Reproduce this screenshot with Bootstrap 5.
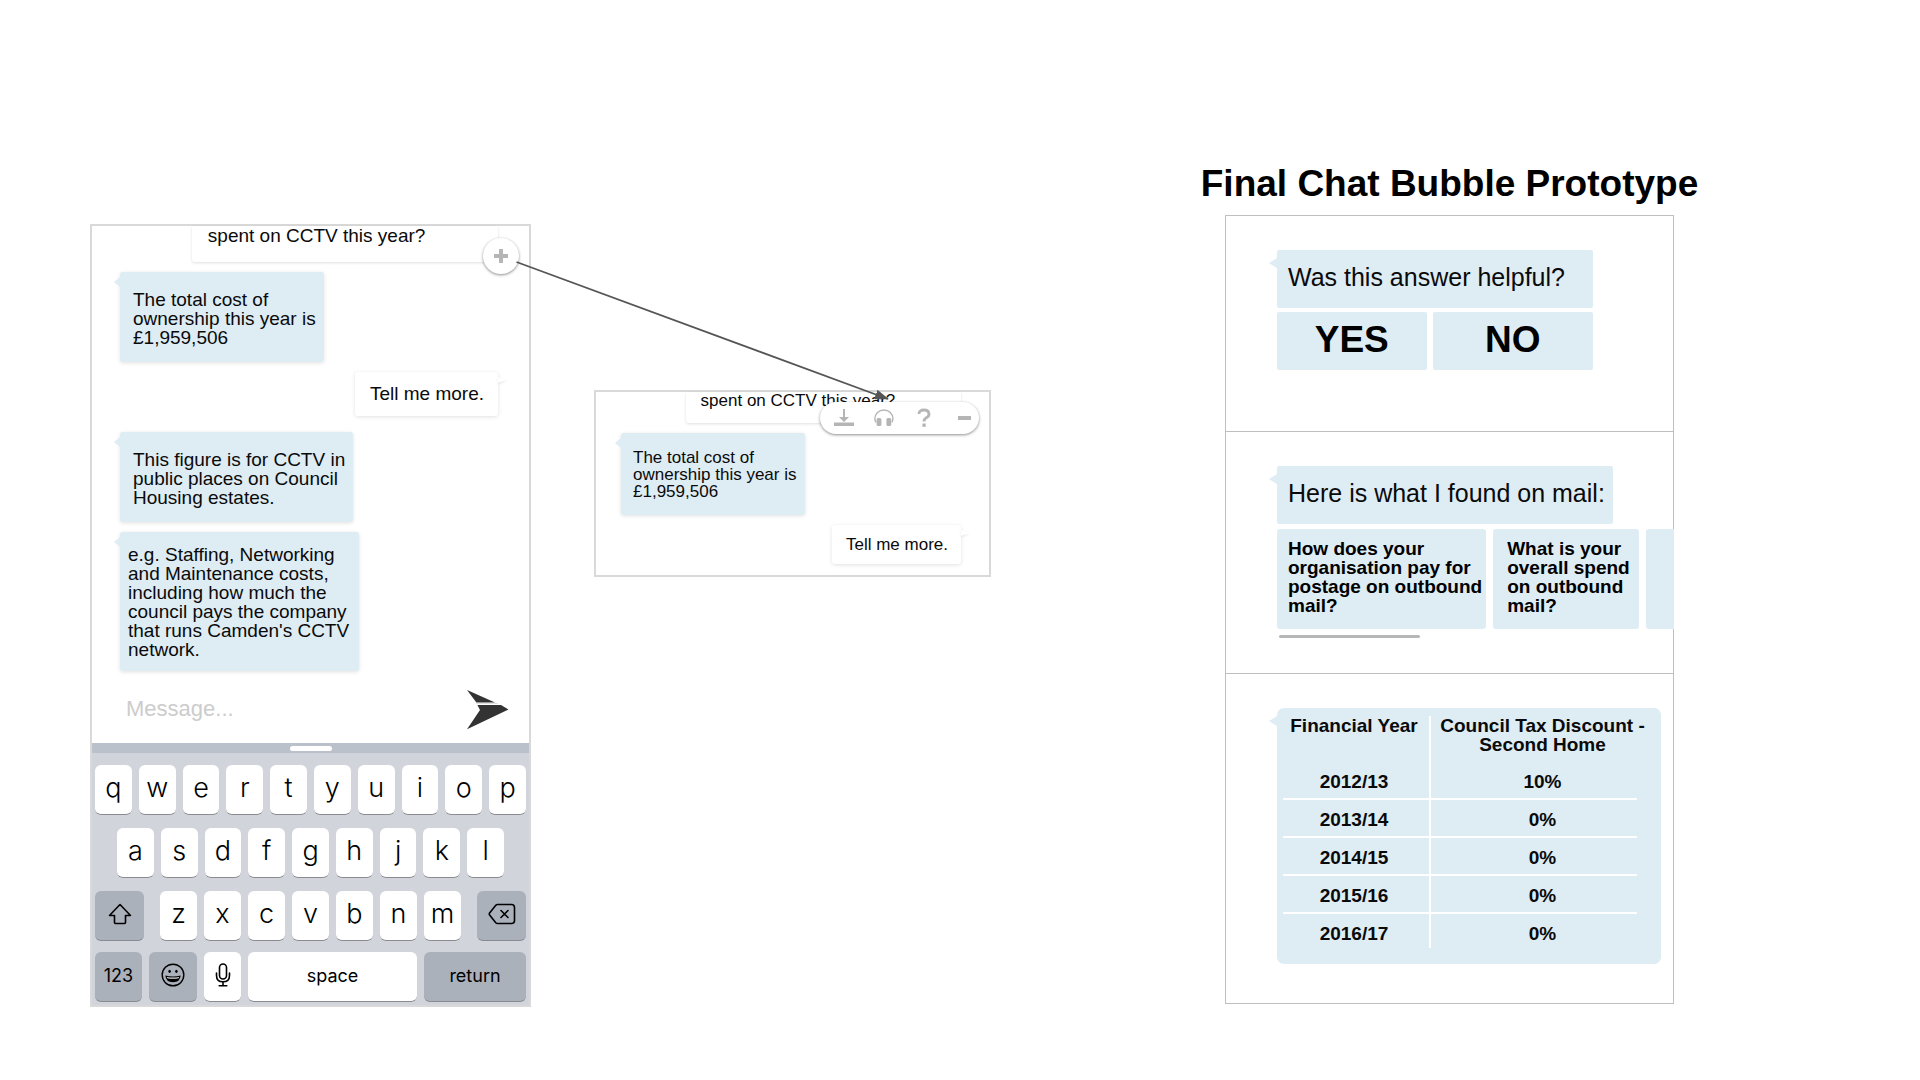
<!DOCTYPE html>
<html lang="en">
<head>
<meta charset="utf-8">
<meta name="viewport" content="width=device-width, initial-scale=1">
<title>Final Chat Bubble Prototype</title>
<link href="https://cdn.jsdelivr.net/npm/bootstrap@5.3.0/dist/css/bootstrap.min.css" rel="stylesheet">
<style>
  :root { --bubble: #deecf4; --frame: #d9d9d9; }
  body { background: #fff; color: #0a0a0a; font-family: "Liberation Sans", Arial, sans-serif; }
  .board {
    display: grid; align-items: start; min-height: 100vh;
    grid-template-columns: minmax(0, 90fr) minmax(0, 441fr) minmax(0, 63fr) minmax(0, 397fr) minmax(0, 234fr) minmax(0, 449fr) minmax(0, 246fr);
  }
  .phone-col { grid-column: 2; padding-top: 224px; }
  .detail-col { grid-column: 4; padding-top: 390px; }
  .final-col { grid-column: 6; padding-top: 162px; }
  .link-arrow { top: 0; left: 0; pointer-events: none; z-index: 5; }

  /* Chat frames */
  .chat-frame { border: 2px solid var(--frame); }
  .thread { font-size: 19px; line-height: 19px; padding: 0 31px 0 28px; }
  .thread-sm { font-size: 17px; line-height: 17px; padding: 0 28px 11px 25px; }
  .bubble { position: relative; border-radius: 3px; box-shadow: 0 1px 4px rgba(0,0,0,.12); padding: 18px 8px 15px 13px; }
  .bubble-in { background: var(--bubble); align-self: flex-start; }
  .bubble-out { background: #fff; align-self: flex-end; padding: 12px 14px 13px 15px; }
  .bubble-in::before, .answer::before {
    content: ""; position: absolute; left: -6px; top: 5px;
    border: 5px solid transparent; border-left: 0; border-right: 6px solid var(--bubble);
  }
  .bubble-out.tailed::after {
    content: ""; position: absolute; right: -8px; top: 5px;
    border: 3px solid transparent; border-right: 0; border-left: 8px solid #fff;
    filter: drop-shadow(0 1px 1px rgba(0,0,0,.1));
  }
  .bubble-cut { border-radius: 0 0 3px 3px; width: 81%; padding: 0 16px 17px; box-shadow: 0 1px 3px rgba(0,0,0,.12); }
  .bubble-long { padding: 13px 10px 12px 8px; }
  .thread-sm .bubble { padding: 16px 9px 15px 12px; }
  .thread-sm .bubble-out { padding: 11px 13px 11px 14px; }
  .thread-sm .bubble-cut { padding: 0 15px 14px; }
  .gap-a { margin-top: 10px; } .gap-b { margin-top: 16px; }
  .add-btn {
    position: absolute; right: -21px; bottom: -12px; width: 36px; height: 36px; padding: 0;
    border: 0; border-radius: 50%; background: #fff; box-shadow: 0 1px 3px rgba(0,0,0,.45); line-height: 0;
  }
  .toolbar {
    position: absolute; right: -18px; bottom: -11px; width: 159px; height: 32px;
    background: #fff; border-radius: 16px; box-shadow: 0 1px 3px rgba(0,0,0,.45); padding: 0 5px 0 14px;
  }
  .toolbar button { border: 0; background: none; padding: 0; width: 20px; height: 28px; line-height: 0; }

  /* Composer */
  .composer { height: 72px; padding: 3px 20px 0 34px; }
  .composer input { border: 0; padding: 0; font-size: 22px; color: #333; min-width: 0; outline: 0; }
  .composer input::placeholder { color: #ccc; opacity: 1; }
  .composer button { border: 0; background: none; padding: 2px 0 0; line-height: 0; }

  /* Keyboard */
  .keyboard { background: #d1d4da; font-family: Inter, Roboto, sans-serif; }
  .grip { background: #bac1ca; height: 10px; }
  .grip span { width: 42px; height: 5px; border-radius: 3px; background: #fff; }
  .keys { padding: 12px 3px 3px; }
  .key-rows { display: flex; flex-direction: column; gap: 13px; }
  .key-row { display: flex; gap: 7px; }
  .key-row-inset { padding: 0 22px; }
  .key {
    flex: 1 1 0; min-width: 0; height: 50px; padding: 0 0 4px; border: 0; border-bottom: 1px solid #898b90;
    border-radius: 6px; background: #fff; color: #000; font-size: 27px; line-height: 40px; font-weight: 300;
  }
  .key-dark { background: #abb1bb; }
  .key-word { font-size: 18px; font-weight: 400; padding: 0 0 2px; }
  .key svg { display: block; margin: 0 auto; }
  .row-4 { margin-top: 11px; }

  /* Final prototype panels */
  .final-title { font-size: 37px; line-height: 44px; font-weight: 700; color: #000; margin: 0 0 9px; white-space: nowrap; }
  .panels { border: 1px solid #bfbfbf; }
  .panel { padding: 34px 0 0 51px; }
  .panel + .panel { border-top: 1px solid #bfbfbf; }
  .answer { position: relative; background: var(--bubble); border-radius: 2px; }
  .answer::before { left: -8px; top: 8px; border-right-width: 8px; }
  .answer-line { font-size: 25px; line-height: 29px; padding: 13px 8px 16px 11px; }
  .choice { border: 0; border-radius: 2px; background: var(--bubble); color: #000; font-size: 37px; line-height: 41px; font-weight: 700; padding: 7px 0 10px; }
  .helpful { width: 316px; max-width: 100%; }
  .scroller { gap: 7px; margin: 5px -1px 0 0; overflow: hidden; }
  .option { flex: none; height: 100px; border: 0; border-radius: 3px; background: var(--bubble); color: #000; text-align: left; font-size: 19px; line-height: 19px; font-weight: 700; padding: 10px 4px 14px 11px; display: flex; align-items: flex-start; }
  .option-b { padding-left: 14px; padding-right: 9px; }
  .track { width: 141px; height: 3px; border-radius: 2px; background: #b7b7b7; margin: 6px 0 35px 2px; }
  .tax { border-radius: 7px; padding: 8px 7px 16px 6px; margin: 0 12px 39px 0; }
  .tax table { width: 100%; font-size: 19px; line-height: 19px; font-weight: 700; text-align: center; border-collapse: separate; border-spacing: 0; table-layout: fixed; }
  .tax th { height: 46px; vertical-align: top; padding: 0; white-space: nowrap; }
  .tax td { padding: 10px 0 9px; background: linear-gradient(#fff, #fff) no-repeat left bottom / calc(100% - 17px) 2px; }
  .tax tr > :first-child { width: 148px; padding-right: 4px; border-right: 2px solid #fff; }
  .tax td:first-child { background-size: 100% 2px; }
  .tax tr:last-child td { padding-bottom: 5px; background-image: none; }
</style>
</head>
<body>
<main class="board position-relative overflow-hidden">

  <section class="phone-col" aria-label="Chat on phone">
    <div class="chat-frame">
      <div class="thread d-flex flex-column">
        <div class="bubble bubble-out bubble-cut">spent on CCTV this year?
          <button class="add-btn" type="button" aria-label="More actions">
            <svg width="14" height="14" viewBox="0 0 14 14"><path d="M7 0v14M0 7h14" stroke="#b5b5b5" stroke-width="4"/></svg>
          </button>
        </div>
        <div class="bubble bubble-in gap-a">The total cost of<br>ownership this year is<br>£1,959,506</div>
        <div class="bubble bubble-out tailed gap-a">Tell me more.</div>
        <div class="bubble bubble-in gap-b">This figure is for CCTV in<br>public places on Council<br>Housing estates.</div>
        <div class="bubble bubble-in bubble-long gap-a">e.g. Staffing, Networking<br>and Maintenance costs,<br>including how much the<br>council pays the company<br>that runs Camden's CCTV<br>network.</div>
      </div>
      <form class="composer d-flex align-items-center" onsubmit="return false">
        <input class="flex-grow-1" type="text" placeholder="Message..." aria-label="Message">
        <button type="submit" aria-label="Send">
          <svg width="42" height="40" viewBox="0 0 42 40" fill="#333"><path d="M0 0 28 12.6H9.4Z"/><path d="M10.4 15H34l7.5 4.5L0 39.2 13 20Z"/><path d="M9 13.6H31" stroke="#ddd" stroke-width="1"/></svg>
        </button>
      </form>
      <div class="keyboard">
        <div class="grip d-flex justify-content-center align-items-center"><span></span></div>
        <div class="keys">
          <div class="key-rows">
            <div class="key-row">
              <button class="key" type="button">q</button><button class="key" type="button">w</button><button class="key" type="button">e</button><button class="key" type="button">r</button><button class="key" type="button">t</button><button class="key" type="button">y</button><button class="key" type="button">u</button><button class="key" type="button">i</button><button class="key" type="button">o</button><button class="key" type="button">p</button>
            </div>
            <div class="key-row key-row-inset">
              <button class="key" type="button">a</button><button class="key" type="button">s</button><button class="key" type="button">d</button><button class="key" type="button">f</button><button class="key" type="button">g</button><button class="key" type="button">h</button><button class="key" type="button">j</button><button class="key" type="button">k</button><button class="key" type="button">l</button>
            </div>
            <div class="d-flex gap-3">
              <button class="key key-dark" type="button" aria-label="Shift" style="flex-grow:49">
                <svg width="24" height="22" viewBox="0 0 24 22" fill="none" stroke="#000" stroke-width="1.6" stroke-linejoin="round"><path d="M12 1.5 1.5 12.5H6.5V19.5Q6.5 20.5 7.5 20.5H16.5Q17.5 20.5 17.5 19.5V12.5H22.5Z"/></svg>
              </button>
              <div class="key-row" style="flex:301 1 0">
                <button class="key" type="button">z</button><button class="key" type="button">x</button><button class="key" type="button">c</button><button class="key" type="button">v</button><button class="key" type="button">b</button><button class="key" type="button">n</button><button class="key" type="button">m</button>
              </div>
              <button class="key key-dark" type="button" aria-label="Delete" style="flex-grow:49">
                <svg width="28" height="22" viewBox="0 0 28 22" fill="none" stroke="#000" stroke-width="1.6" stroke-linejoin="round" stroke-linecap="round"><path d="M9.5 1.5H23.5Q26.5 1.5 26.5 4.5V17.5Q26.5 20.5 23.5 20.5H9.5Q8.5 20.5 7.8 19.7L1.6 12Q.9 11 1.6 10L7.8 2.3Q8.5 1.5 9.5 1.5ZM13 7.5 20 14.5M20 7.5 13 14.5"/></svg>
              </button>
            </div>
          </div>
          <div class="key-row row-4">
            <button class="key key-dark key-word" type="button" style="flex-grow:47">123</button>
            <button class="key key-dark" type="button" aria-label="Emoji" style="flex-grow:48">
              <svg width="24" height="24" viewBox="0 0 24 24"><circle cx="12" cy="12" r="10.8" fill="none" stroke="#000" stroke-width="1.4"/><ellipse cx="8.6" cy="8.3" rx="1.2" ry="1.6"/><ellipse cx="15.4" cy="8.3" rx="1.2" ry="1.6"/><path d="M4.3 12.5Q12 14.5 19.7 12.5Q19 19.3 12 19.3T4.3 12.5Z"/><path d="M5.8 13.9Q12 15.3 18.2 13.9L17.7 15.2Q12 16.5 6.3 15.2Z" fill="#dfe1e5"/></svg>
            </button>
            <button class="key" type="button" aria-label="Dictate" style="flex-grow:37">
              <svg width="16" height="24" viewBox="0 0 16 24" fill="none" stroke="#000" stroke-width="1.6" stroke-linecap="round"><rect x="4.5" y="1" width="7" height="15" rx="3.5"/><path d="M1.5 10V12.5Q1.5 18.8 8 18.8T14.5 12.5V10M8 19V22.8M4.2 22.8H11.8"/></svg>
            </button>
            <button class="key key-word" type="button" style="flex-grow:169">space</button>
            <button class="key key-dark key-word" type="button" style="flex-grow:102">return</button>
          </div>
        </div>
      </div>
    </div>
  </section>

  <section class="detail-col" aria-label="Expanded actions">
    <div class="chat-frame">
      <div class="thread-sm d-flex flex-column">
        <div class="bubble bubble-out bubble-cut">spent on CCTV this year?
          <div class="toolbar d-flex align-items-center justify-content-between">
            <button type="button" aria-label="Download"><svg width="20" height="18" viewBox="0 0 20 18" fill="#b5b5b5"><path d="M9 0h2v8h4l-5 5-5-5h4ZM0 13.5h20V17H0Z"/></svg></button>
            <button type="button" aria-label="Listen"><svg width="20" height="18" viewBox="0 0 20 18"><path d="M1.9 13.5Q.9 11.5.9 9.5A9 8.5 0 0 1 18.9 9.5Q18.9 11.5 17.9 13.5" fill="none" stroke="#b5b5b5" stroke-width="1.4"/><rect x="2.6" y="9" width="4.8" height="8" rx="1.5" fill="#b5b5b5"/><rect x="12.4" y="9" width="4.8" height="8" rx="1.5" fill="#b5b5b5"/></svg></button>
            <button type="button" aria-label="Help"><svg width="14" height="20" viewBox="0 0 14 20"><path d="M2 6Q2 2 7 2T12 6.2Q12 8.3 9.3 9.8Q7 11.2 7 13.5" fill="none" stroke="#b5b5b5" stroke-width="2.8"/><rect x="5.4" y="15.5" width="3.3" height="3.3" fill="#b5b5b5"/></svg></button>
            <button type="button" aria-label="Collapse"><svg width="13" height="4" viewBox="0 0 13 4"><path d="M0 0h13v4H0Z" fill="#b5b5b5"/></svg></button>
          </div>
        </div>
        <div class="bubble bubble-in gap-a">The total cost of<br>ownership this year is<br>£1,959,506</div>
        <div class="bubble bubble-out tailed gap-a">Tell me more.</div>
      </div>
    </div>
  </section>

  <section class="final-col">
    <div class="d-flex justify-content-center"><h1 class="final-title">Final Chat Bubble Prototype</h1></div>
    <div class="panels">
      <div class="panel" style="padding-bottom:61px">
        <div class="helpful">
          <div class="answer answer-line">Was this answer helpful?</div>
          <div class="d-flex mt-1" style="gap:6px">
            <button class="choice" type="button" style="flex:150 1 0">YES</button>
            <button class="choice" type="button" style="flex:161 1 0">NO</button>
          </div>
        </div>
      </div>
      <div class="panel">
        <div class="d-flex"><div class="answer answer-line">Here is what I found on mail:</div></div>
        <div class="scroller d-flex">
          <button class="option" type="button">How does your<br>organisation pay for<br>postage on outbound<br>mail?</button>
          <button class="option option-b" type="button">What is your<br>overall spend<br>on outbound<br>mail?</button>
          <button class="option option-b" type="button" aria-label="Next question" style="width:145px"></button>
        </div>
        <div class="track"></div>
      </div>
      <div class="panel">
        <div class="answer tax">
          <table>
            <thead><tr><th>Financial Year</th><th>Council Tax Discount -<br>Second Home</th></tr></thead>
            <tbody>
              <tr><td>2012/13</td><td>10%</td></tr>
              <tr><td>2013/14</td><td>0%</td></tr>
              <tr><td>2014/15</td><td>0%</td></tr>
              <tr><td>2015/16</td><td>0%</td></tr>
              <tr><td>2016/17</td><td>0%</td></tr>
            </tbody>
          </table>
        </div>
      </div>
    </div>
  </section>

  <svg class="link-arrow position-absolute w-100 h-100" aria-hidden="true">
    <defs><marker id="head" viewBox="0 0 14 10" refX="13" refY="5" markerWidth="14" markerHeight="10" markerUnits="userSpaceOnUse" orient="auto"><path d="M0 0 14 5 0 10Z" fill="#555"/></marker></defs>
    <line x1="26.9%" y1="262" x2="46.25%" y2="399" stroke="#555" stroke-width="1.8" marker-end="url(#head)"/>
  </svg>
</main>
<script src="https://cdn.jsdelivr.net/npm/bootstrap@5.3.0/dist/js/bootstrap.bundle.min.js"></script>
</body>
</html>
